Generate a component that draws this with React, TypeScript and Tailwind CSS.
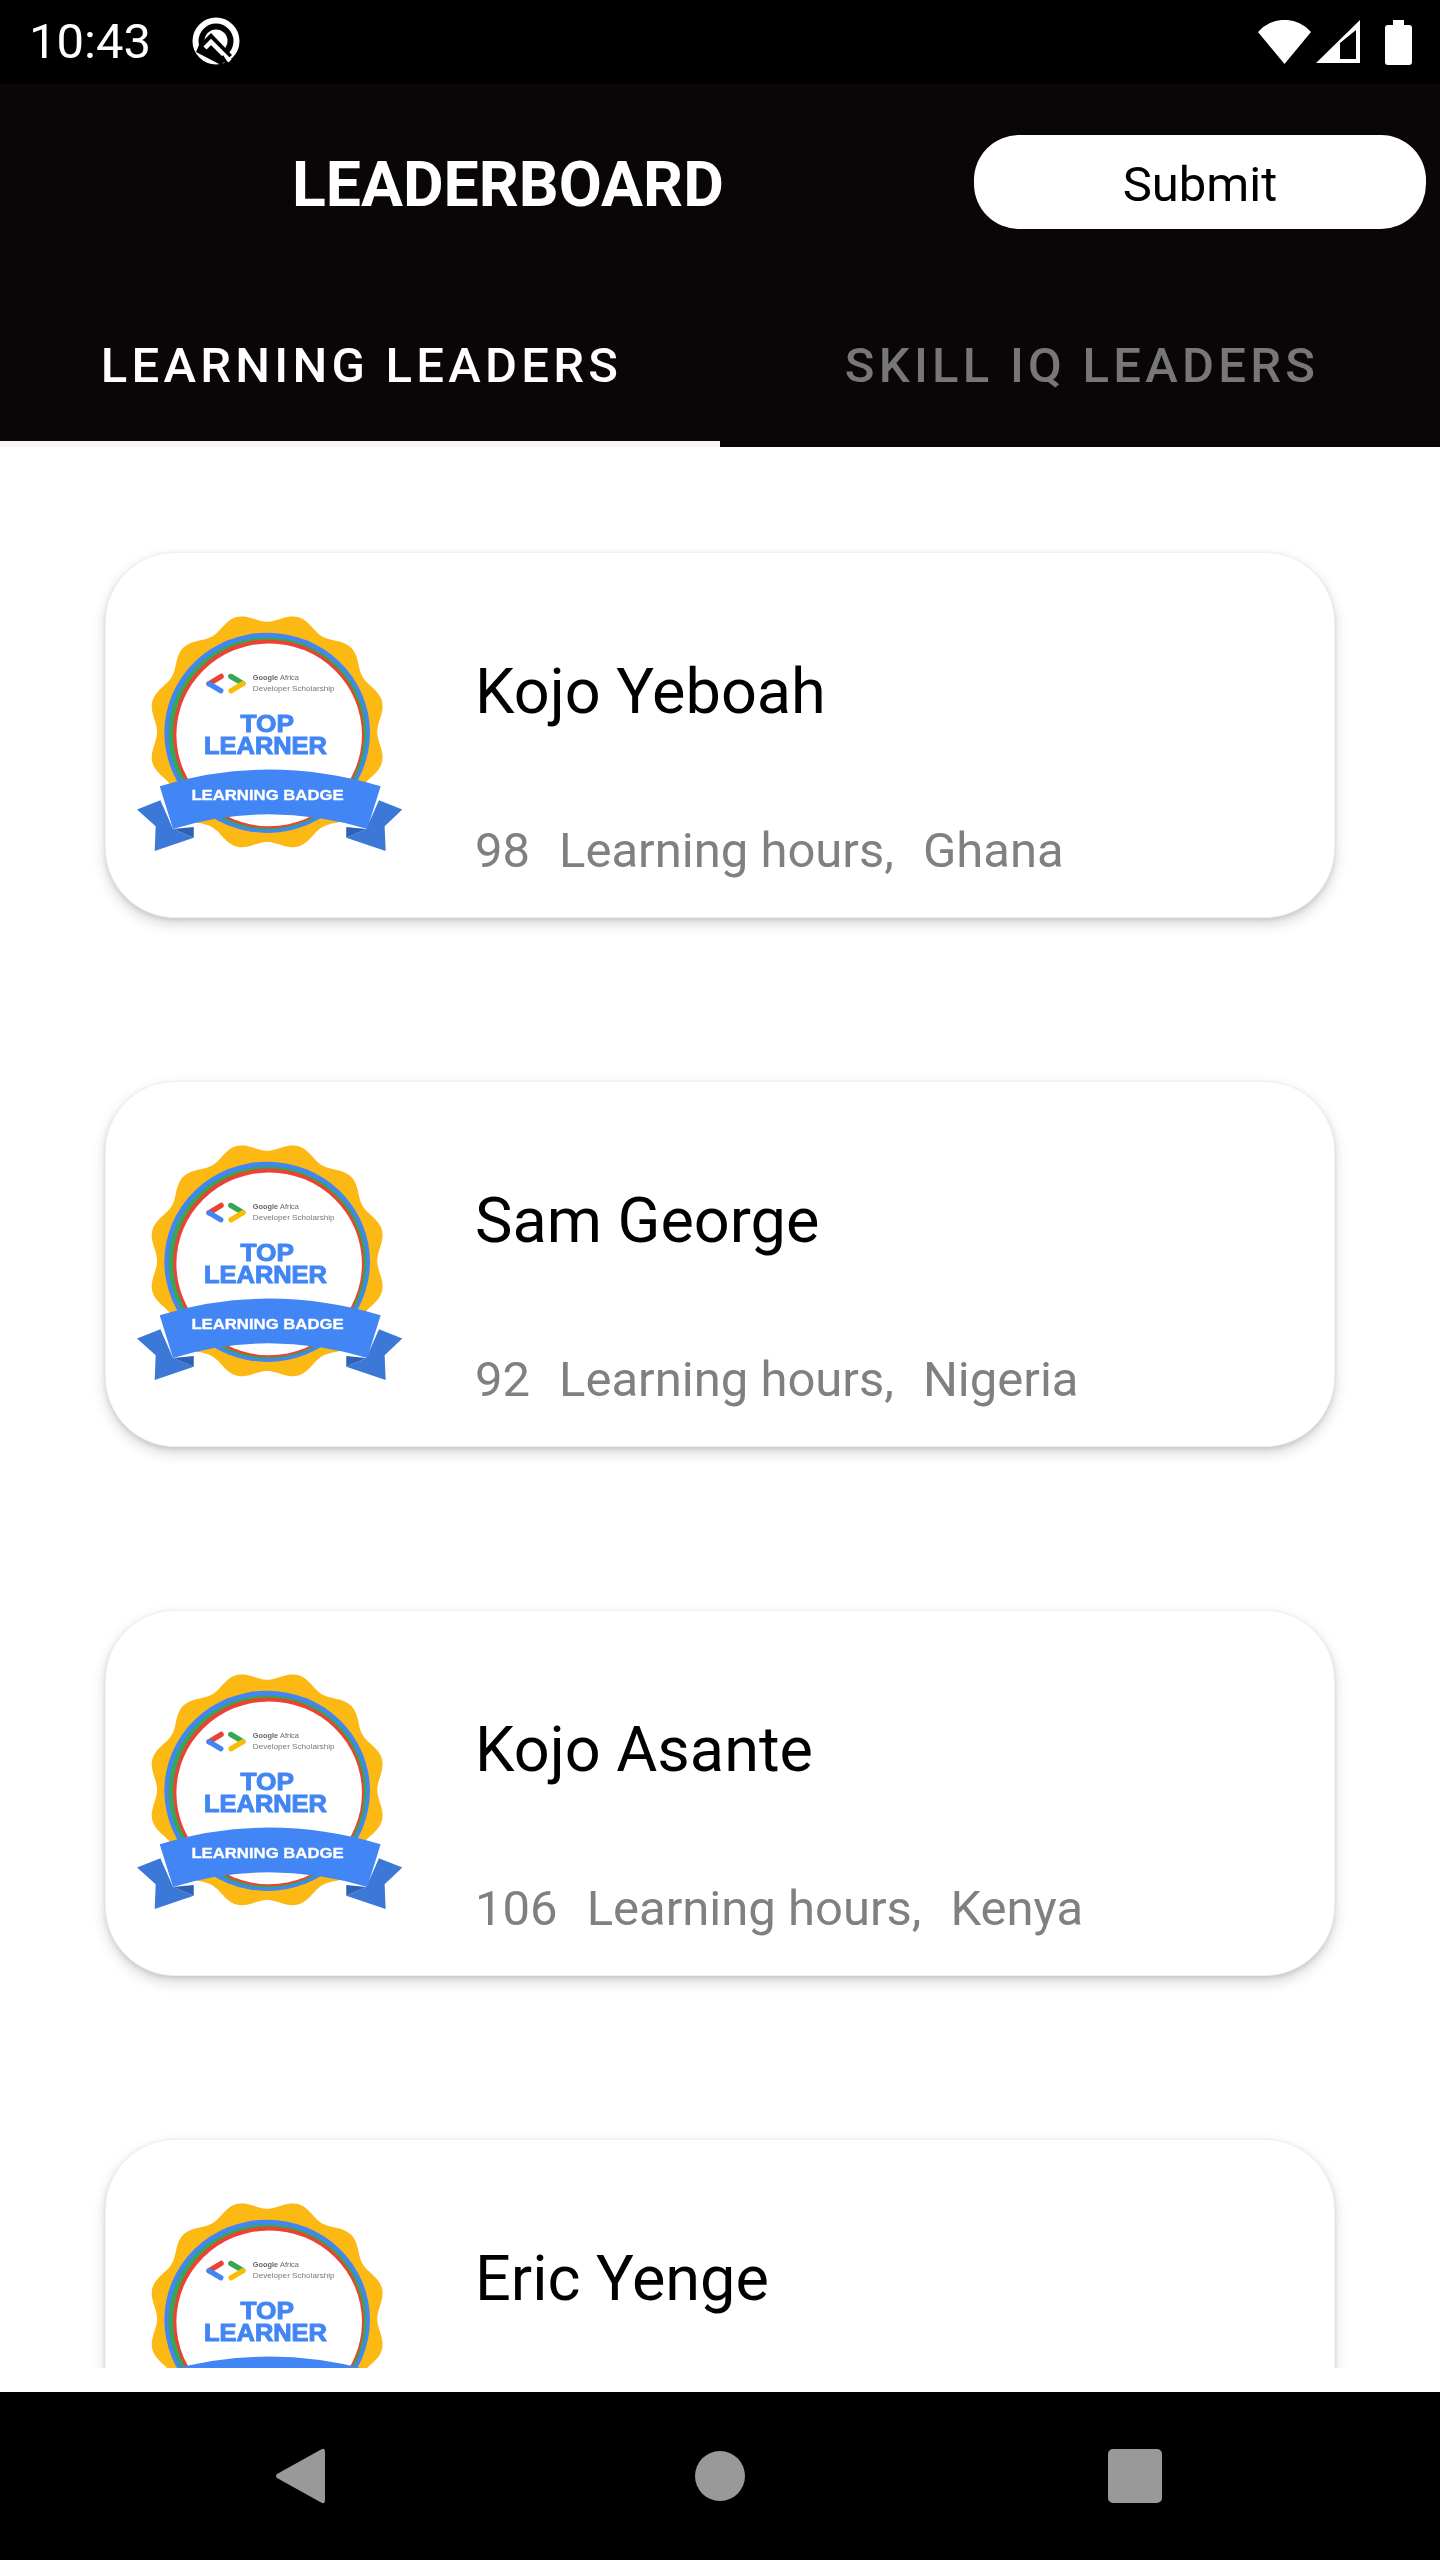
const lobePoints = Array.from({ length: 360 }, (_, i) => {
	const a = (i * Math.PI) / 180;
	const r = 343 + 13 * Math.cos(12 * (a - Math.PI / 12));
	return `${(500 + r * Math.sin(a)).toFixed(1)},${(575 - r * Math.cos(a)).toFixed(1)}`;
}).join(" ");

function Badge() {
	return (
		<svg
			viewBox="110 225 800 710"
			className="w-[267px] h-[237px] shrink-0 blur-[0.6px]"
			style={{ fontFamily: '"Liberation Sans", Arial, sans-serif' }}
		>
			<polygon points={lobePoints} fill="#fdb913" />
			<ellipse cx="500" cy="578" rx="308" ry="300" fill="#4285f4" />
			<ellipse cx="501" cy="580" rx="296" ry="288" fill="#34a853" />
			<ellipse cx="504" cy="581" rx="286" ry="283" fill="#ea4335" />
			<ellipse cx="506" cy="584" rx="278" ry="274" fill="#ffffff" />

			<g strokeWidth="16" strokeLinecap="round" fill="none">
				<path d="M362 409 L326 431" stroke="#ea4335" />
				<path d="M326 431 L361 452" stroke="#4285f4" />
				<path d="M391 409 L427 430" stroke="#34a853" />
				<path d="M427 431 L392 452" stroke="#fbbc04" />
			</g>
			<text x="457" y="420" fontSize="22" fontWeight="700" fill="#666666">
				Google <tspan fontWeight="400">Africa</tspan>
			</text>
			<text x="457" y="452" fontSize="22" fill="#777777" textLength="245" lengthAdjust="spacingAndGlyphs">
				Developer Scholarship
			</text>
			<text
				x="500"
				y="575"
				fontSize="72"
				fontWeight="700"
				fill="#4285f4"
				stroke="#4285f4"
				strokeWidth="3"
				textAnchor="middle"
				textLength="160"
				lengthAdjust="spacingAndGlyphs"
			>
				TOP
			</text>
			<text
				x="495"
				y="641"
				fontSize="70"
				fontWeight="700"
				fill="#4285f4"
				stroke="#4285f4"
				strokeWidth="3"
				textAnchor="middle"
				textLength="368"
				lengthAdjust="spacingAndGlyphs"
			>
				LEARNER
			</text>

			<polygon points="110,808 180,780 218,866 280,892 163,932 166,858" fill="#3b78d8" />
			<polygon points="905,808 835,780 797,866 737,892 855,932 852,858" fill="#3b78d8" />
			<polygon points="218,866 280,860 280,892" fill="#2f62b5" />
			<polygon points="797,866 737,860 737,892" fill="#2f62b5" />
			<path d="M178 738 Q500 638 840 738 L800 866 Q500 778 218 866 Z" fill="#4285f4" />
			<text
				x="501"
				y="780"
				fontSize="46"
				fontWeight="700"
				fill="#ffffff"
				stroke="#ffffff"
				strokeWidth="1"
				textAnchor="middle"
				textLength="456"
				lengthAdjust="spacingAndGlyphs"
			>
				LEARNING BADGE
			</text>
		</svg>
	);
}

const leaders = [
	{ name: "Kojo Yeboah", hours: "98", country: "Ghana" },
	{ name: "Sam George", hours: "92", country: "Nigeria" },
	{ name: "Kojo Asante", hours: "106", country: "Kenya" },
	{ name: "Eric Yenge" },
];

function LeaderCard({ name, hours, country }: { name: string; hours?: string; country?: string }) {
	return (
		<div className="mx-[105px] h-[366px] shrink-0 flex rounded-[70px] bg-white border border-[#f0f0f0] shadow-[0_6px_14px_rgba(0,0,0,0.16),0_2px_4px_rgba(0,0,0,0.1)]">
			<div className="ml-[31px] mt-[62px]">
				<Badge />
			</div>
			<div className="ml-[71px] pt-[102px] flex flex-col">
				<div className="text-[63px] leading-[74px] text-black">{name}</div>
				{hours && (
					<div className="mt-[93px] flex gap-[29px] text-[49px] leading-[57px] text-[#808080]">
						<span>{hours}</span>
						<span>Learning hours,</span>
						<span>{country}</span>
					</div>
				)}
			</div>
		</div>
	);
}

function StatusBar() {
	return (
		<div className="h-[84px] bg-black flex items-center pl-[29px] pr-[28px] text-white">
			<span className="text-[49px] leading-[84px] font-normal">10:43</span>
			<svg viewBox="0 0 50 50" className="ml-[40px] w-[50px] h-[50px]">
				<circle cx="25" cy="24" r="20.5" fill="none" stroke="#fff" strokeWidth="6" />
				<circle cx="25" cy="24" r="11.5" fill="#fff" />
				<path d="M20 16 L41 38 L30 48 L5 35 L8 28 Z" fill="#000" />
				<path d="M14 31 L20 25 L39 44" fill="none" stroke="#fff" strokeWidth="4.5" />
				<path d="M31 39 L38 50" fill="none" stroke="#000" strokeWidth="3" />
			</svg>
			<div className="ml-auto flex items-center">
				<svg viewBox="0 0 53 44" className="w-[53px] h-[44px]">
					<path d="M0 12 A35 35 0 0 1 53 12 L26.5 44 Z" fill="#fff" />
				</svg>
				<svg viewBox="0 0 44 44" className="ml-[5px] w-[44px] h-[44px]">
					<path fillRule="evenodd" d="M44 0 V43 H0 Z M40 10 L24 23 V39 H40 Z" fill="#fff" />
				</svg>
				<svg viewBox="0 0 27 45" className="ml-[25px] w-[27px] h-[45px]">
					<path d="M8 0 H19 V5 H24 Q27 5 27 8 V42 Q27 45 24 45 H3 Q0 45 0 42 V8 Q0 5 3 5 H8 Z" fill="#fff" />
				</svg>
			</div>
		</div>
	);
}

function NavBar() {
	return (
		<div className="h-[168px] bg-black flex items-center pl-[275px] shrink-0">
			<svg viewBox="0 0 51 56" className="w-[51px] h-[56px]">
				<path d="M47 1 Q50 0 50 4 V52 Q50 56 47 55 L2 30 Q0 28 2 26 Z" fill="#999999" />
			</svg>
			<div className="ml-[369px] w-[50px] h-[50px] rounded-full bg-[#999999]" />
			<div className="ml-[363px] w-[54px] h-[54px] rounded-[5px] bg-[#999999]" />
		</div>
	);
}

export default function App() {
	return (
		<div className="w-[1440px] h-[2560px] flex flex-col bg-white overflow-hidden [font-family:Roboto,sans-serif]">
			<StatusBar />

			<div className="h-[363px] shrink-0 bg-[#0a0608] flex flex-col">
				<div className="h-[252px] flex items-start">
					<h1 className="ml-[292px] mt-[64px] text-[62.5px] leading-[74px] font-bold text-white">LEADERBOARD</h1>
					<button className="ml-auto mr-[14px] mt-[51px] w-[452px] h-[94px] rounded-[45px] bg-white text-black text-[49px] leading-[94px] pt-[3px]">
						Submit
					</button>
				</div>
				<div className="flex flex-1 text-[49px] leading-[57px] font-medium tracking-[0.087em]">
					<div className="w-[720px] flex justify-center pt-[1px] pl-[3px] border-b-[6px] border-[#f5f5f5] text-white">LEARNING LEADERS</div>
					<div className="w-[720px] flex justify-center pt-[1px] pl-[4px] text-[#777777]">SKILL IQ LEADERS</div>
				</div>
			</div>

			<div className="h-[1921px] shrink-0 overflow-hidden pt-[105px] flex flex-col gap-[163px]">
				{leaders.map((l) => (
					<LeaderCard key={l.name} {...l} />
				))}
			</div>

			<div className="h-[24px] shrink-0" />
			<NavBar />
		</div>
	);
}
